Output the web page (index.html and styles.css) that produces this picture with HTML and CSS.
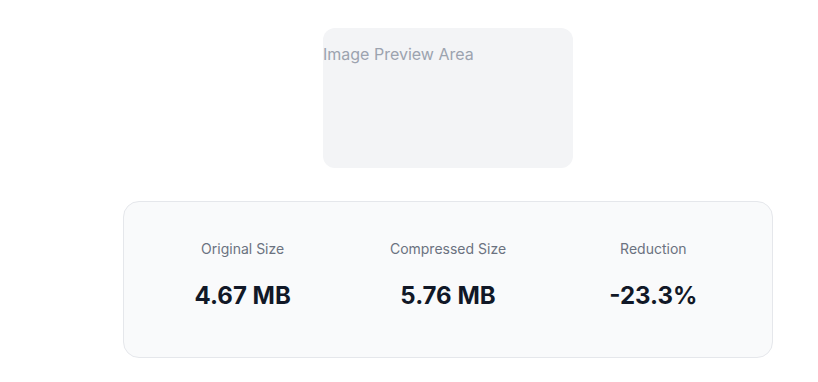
FILE: index.html
```html
<!DOCTYPE html>
<html lang="en">
<head>
    <meta charset="UTF-8">
    <meta name="viewport" content="width=device-width, initial-scale=1.0">
    <title>Compression Result</title>
    <link rel="stylesheet" href="styles.css">
</head>
<body>
    <main class="result">
        <div class="preview">Image Preview Area</div>

        <div class="stats">
            <div class="stat">
                <div class="stat-label">Original Size</div>
                <div class="stat-value">4.67 MB</div>
            </div>
            <div class="stat">
                <div class="stat-label">Compressed Size</div>
                <div class="stat-value">5.76 MB</div>
            </div>
            <div class="stat">
                <div class="stat-label">Reduction</div>
                <div class="stat-value">-23.3%</div>
            </div>
        </div>
    </main>
</body>
</html>
```

FILE: styles.css
```css
body {
    margin: 0;
    background-color: #fff;
    font-family: Inter, "Liberation Sans", Arial, sans-serif;
}

.result {
    width: 650px;
    margin-left: 123px;
    padding-top: 28px;
    display: flex;
    flex-direction: column;
    align-items: center;
    gap: 33px;
}

.preview {
    width: 250px;
    height: 140px;
    box-sizing: border-box;
    padding-top: 14px;
    background-color: #f3f4f6;
    border-radius: 12px;
    color: #9ca3af;
    font-size: 16px;
    line-height: 24px;
}

.stats {
    width: 100%;
    box-sizing: border-box;
    display: grid;
    grid-template-columns: repeat(3, 1fr);
    gap: 16px;
    padding: 37px 24px 45px;
    background-color: #f9fafb;
    border: 1px solid #e5e7eb;
    border-radius: 16px;
}

.stat {
    text-align: center;
}

.stat-label {
    font-size: 14px;
    line-height: 20px;
    color: #6b7280;
}

.stat-value {
    margin-top: 21px;
    font-size: 24px;
    line-height: 32px;
    font-weight: 700;
    color: #111827;
}
```
